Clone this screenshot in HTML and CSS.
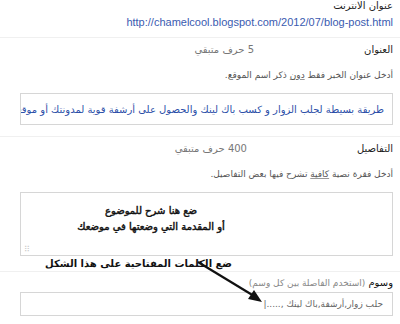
FILE: index.html
```html
<!DOCTYPE html>
<html lang="ar" dir="rtl">
  <head>
    <meta charset="UTF-8" />
    <title>إنشاء خبر</title>
    <link rel="stylesheet" href="styles.css">
  </head>
  <body>
    <div class="page">
      <section class="block url-block">
        <div class="label">عنوان الانترنت</div>
        <a class="url" dir="ltr" href="#">http://chamelcool.blogspot.com/2012/07/blog-post.html</a>
      </section>

      <section class="block">
        <div class="row">
          <span class="label">العنوان</span>
          <span class="counter">5 حرف متبقي</span>
        </div>
        <p class="hint">أدخل عنوان الخبر فقط <u>دون</u> ذكر اسم الموقع.</p>
        <div class="box title-box">
          <span class="title-text">طريقة بسيطة لجلب الزوار و كسب باك لينك والحصول على أرشفة قوية لمدونتك أو موقعك</span>
        </div>
      </section>

      <section class="block">
        <div class="row">
          <span class="label">التفاصيل</span>
          <span class="counter">400 حرف متبقي</span>
        </div>
        <p class="hint">أدخل فقرة نصية <u>كافية</u> تشرح فيها بعض التفاصيل.</p>
        <div class="box details-box">
          <div class="details-text">
            <span>ضع هنا شرح للموضوع</span>
            <span>أو المقدمة التي وضعتها في موضعك</span>
          </div>
          <span class="grip">⠿</span>
        </div>
      </section>

      <section class="block tags-block">
        <div class="label"><span class="strong">وسوم</span> <span class="muted">(استخدم الفاصلة بين كل وسم)</span></div>
        <div class="box tags-box">حلب زوار,أرشفة,باك لينك ,.....|</div>
      </section>

      <div class="note">ضع الكلمات المفتاحية على هذا الشكل</div>
      <svg class="arrow" width="80" height="50" viewBox="0 0 80 50">
        <line x1="2" y1="2" x2="58" y2="36" stroke="#111" stroke-width="2.2" />
        <polygon points="66,42 52,39 58,30" fill="#111" />
      </svg>
    </div>
  </body>
</html>
```

FILE: styles.css
```css
body {
  margin: 0;
  background: #fff;
  font-family: "DejaVu Sans", sans-serif;
  font-size: 10px;
  color: #333;
}

.page {
  position: relative;
  width: 400px;
  height: 324px;
  overflow: hidden;
}

.block {
  padding: 0 7px 0 5px;
  border-bottom: 1px solid #f0f0f0;
}

.url-block {
  padding-top: 0;
  padding-bottom: 8px;
}

.label {
  color: #222;
  line-height: 12px;
}

.url {
  display: block;
  margin-top: 3px;
  text-align: right;
  color: #3a5bb0;
  text-decoration: none;
  font-family: "Liberation Sans", sans-serif;
  font-size: 11px;
  line-height: 14px;
}

.row {
  display: flex;
  gap: 110px;
  padding-top: 6px;
  line-height: 12px;
}

.row + .hint {
  margin-top: 13px;
}

.counter {
  color: #777;
}

.hint {
  margin: 0;
  color: #555;
  font-size: 9px;
  line-height: 12px;
}

.hint u {
  text-decoration-color: #999;
}

.box {
  border: 1px solid #d6d6d6;
  margin-left: 15px;
  background: #fff;
}

.title-box {
  margin-top: 12px;
  margin-bottom: 11px;
  height: 30px;
  display: flex;
  align-items: center;
  overflow: hidden;
  padding-right: 8px;
}

.title-text {
  white-space: nowrap;
  color: #2c4fa8;
  font-size: 10px;
}

.details-box {
  position: relative;
  margin-top: 12px;
  margin-bottom: 15px;
  height: 62px;
}

.details-text {
  width: 260px;
  margin: 10px auto 0 0;
  text-align: center;
  color: #111;
  font-size: 10px;
  line-height: 16px;
  -webkit-text-stroke: 0.45px #111;
}

.details-text span {
  display: block;
}

.grip {
  position: absolute;
  left: 3px;
  bottom: 1px;
  color: #ccc;
  font-size: 8px;
}

.tags-block {
  border-bottom: none;
  padding-top: 5px;
}

.strong {
  color: #111;
}

.muted {
  color: #888;
  font-size: 9px;
}

.tags-box {
  margin-top: 3px;
  height: 22px;
  line-height: 22px;
  padding-right: 9px;
  color: #666;
  font-size: 9px;
}

.note {
  position: absolute;
  left: 45px;
  top: 258px;
  font-weight: bold;
  font-size: 10px;
  color: #111;
}

.arrow {
  position: absolute;
  left: 196px;
  top: 260px;
}
```
